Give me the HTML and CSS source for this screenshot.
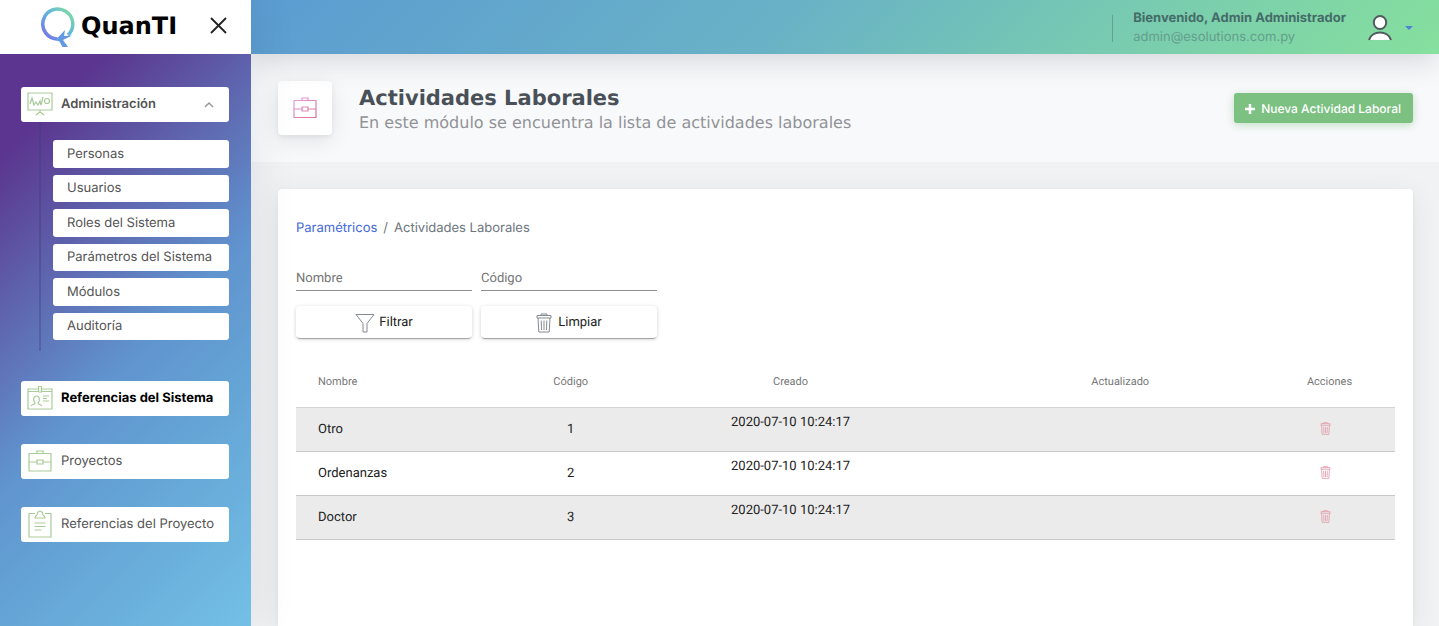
FILE: index.html
```html
<!DOCTYPE html>
<html lang="es">
<head>
<meta charset="utf-8">
<meta name="viewport" content="width=device-width, initial-scale=1">
<title>Actividades Laborales</title>
<link rel="stylesheet" href="styles.css">
</head>
<body>
<svg class="defs" width="0" height="0" aria-hidden="true">
  <defs>
    <linearGradient id="pink" x1="0" y1="0" x2="1" y2="1"><stop offset="0" stop-color="#e3a0e6"/><stop offset="1" stop-color="#e0708c"/></linearGradient>
    <symbol id="trash" viewBox="0 0 16 20"><path d="M5 2.500V1h6v1.500M1 2.500h14v2.500H1zM2 5l.8 14h10.400L14 5M5.200 7.500l.3 9.500M8 7.500V17M10.800 7.500l-.3 9.500"/></symbol>
  </defs>
</svg>
<div class="app">
  <aside class="sidebar">
    <div class="brand">
      <a class="logo" href="#">
        <svg width="35" height="42" viewBox="0 0 35 42" fill="none" aria-hidden="true">
          <defs><linearGradient id="q" x1="0" y1="1" x2="1" y2="0"><stop offset="0" stop-color="#7d6be6"/><stop offset=".5" stop-color="#5fb2e2"/><stop offset="1" stop-color="#86e09d"/></linearGradient></defs>
          <path d="M27 29A15 15 0 1 0 16.500 33" stroke="url(#q)" stroke-width="3.500"/>
          <path d="M14.500 34L24 24L23 30L31 29.500L22 34L27 41H21.500L18.500 35.500z" fill="#6399e2"/>
        </svg>
        <span>QuanTI</span>
      </a>
      <button class="close" aria-label="Cerrar menú"><svg width="17" height="17" viewBox="0 0 17 17" fill="none" stroke="#222" stroke-width="1.800"><path d="M1 1l15 15M16 1L1 16"/></svg></button>
    </div>
    <nav class="menu">
      <div class="group">
        <a class="item open" href="#">
          <svg class="icon" width="26" height="26" viewBox="0 0 26 26"><path d="M1 2h24v17H1zM13 19v3M9 24l4-3 4 3M3 13l2-6 2 7 2-3 2 3 2-4 1 4 2-8"/><circle cx="20" cy="10" r="2.500"/></svg>
          <span class="label">Administración</span>
          <svg class="chevron" width="10" height="7" viewBox="0 0 10 7"><path d="M1 6l4-4 4 4"/></svg>
        </a>
        <div class="submenu">
          <a href="#">Personas</a>
          <a href="#">Usuarios</a>
          <a href="#">Roles del Sistema</a>
          <a href="#">Parámetros del Sistema</a>
          <a href="#">Módulos</a>
          <a href="#">Auditoría</a>
        </div>
      </div>
      <a class="item active" href="#">
        <svg class="icon" width="26" height="26" viewBox="0 0 26 26"><path d="M11.500 4H1v20h24V4H14.500M1 6.500h10.500M14.500 6.500H25M11.500 1.500h3v5.500h-3zM4 21c1-2 4-1 4-3-2-2-2-7 1.500-7s3.500 5 1.500 7c0 2 3 1 4 3M16 11h6M16 13.500h4M16 16h6"/></svg>
        <span class="label">Referencias del Sistema</span>
      </a>
      <a class="item" href="#">
        <svg class="icon" width="26" height="26" viewBox="0 0 26 26"><path d="M2 5.500h22v17.500H2zM10 5.500V3h6v2.500M2 14h8M16 14h8M10 12h6v4h-6z"/></svg>
        <span class="label">Proyectos</span>
      </a>
      <a class="item" href="#">
        <svg class="icon" width="26" height="28" viewBox="0 0 26 28"><path d="M8 3.500H2V27h22V3.500h-6M8 8c0-3 2.500-1.500 2.500-4.500 0-3 5-3 5 0 0 3 2.500 1.500 2.500 4.500zM7.500 13h11M7.500 16.500h11M7.500 20h7"/></svg>
        <span class="label">Referencias del Proyecto</span>
      </a>
    </nav>
  </aside>
  <div class="page">
    <header class="topbar">
      <div class="user">
        <strong>Bienvenido, Admin Administrador</strong>
        <span>admin@esolutions.com.py</span>
      </div>
      <button class="account" aria-label="Cuenta">
        <svg width="24" height="26" viewBox="0 0 24 26" fill="#fff" stroke="#505a5f" stroke-width="2"><ellipse cx="12" cy="7.500" rx="6.200" ry="6.500"/><path d="M1 25C4 15 20 15 23 25" /></svg>
        <svg width="8" height="4" viewBox="0 0 8 4" fill="#4f83d6"><path d="M0 0h8L4 4z"/></svg>
      </button>
    </header>
    <main>
      <section class="heading">
        <div class="badge"><svg width="24" height="22" viewBox="0 0 24 22" fill="none" stroke="url(#pink)" stroke-width="1.200"><path d="M1 3.500h22v17H1zM9 3.500V1h6v2.500M1 12h8M15 12h8M9 10h6v4H9z"/></svg></div>
        <div class="titles">
          <h1>Actividades Laborales</h1>
          <p>En este módulo se encuentra la lista de actividades laborales</p>
        </div>
        <button class="new"><svg width="10" height="10" viewBox="0 0 10 10" stroke="#fff" stroke-width="2.500"><path d="M5 0v10M0 5h10"/></svg>Nueva Actividad Laboral</button>
      </section>
      <section class="card">
        <nav class="crumbs" aria-label="Ruta"><a href="#">Paramétricos</a><span>/</span><span>Actividades Laborales</span></nav>
        <form class="filters">
          <input type="text" placeholder="Nombre" aria-label="Nombre">
          <input type="text" placeholder="Código" aria-label="Código">
          <button type="button"><svg width="20" height="20" viewBox="0 0 20 20"><path d="M1 1.500h18l-7 9V19H8v-8.500z"/></svg>Filtrar</button>
          <button type="button" class="clear"><svg width="16" height="20"><use href="#trash"/></svg>Limpiar</button>
        </form>
        <table>
          <thead><tr><th class="name">Nombre</th><th class="code">Código</th><th class="date">Creado</th><th class="date">Actualizado</th><th class="actions">Acciones</th></tr></thead>
          <tbody>
            <tr><td class="name">Otro</td><td>1</td><td class="created">2020-07-10 10:24:17</td><td></td><td class="actions"><button aria-label="Eliminar Otro"><svg width="11" height="13"><use href="#trash"/></svg></button></td></tr>
            <tr><td class="name">Ordenanzas</td><td>2</td><td class="created">2020-07-10 10:24:17</td><td></td><td class="actions"><button aria-label="Eliminar Ordenanzas"><svg width="11" height="13"><use href="#trash"/></svg></button></td></tr>
            <tr><td class="name">Doctor</td><td>3</td><td class="created">2020-07-10 10:24:17</td><td></td><td class="actions"><button aria-label="Eliminar Doctor"><svg width="11" height="13"><use href="#trash"/></svg></button></td></tr>
          </tbody>
        </table>
      </section>
    </main>
  </div>
</div>
</body>
</html>
```
FILE: styles.css
```css
* { box-sizing: border-box; }
body { margin: 0; font: 13px/20px Inter, "Liberation Sans", sans-serif; color: #495057; text-rendering: geometricPrecision; }
a { color: inherit; text-decoration: none; }
button { border: 0; padding: 0; background: none; font: inherit; color: inherit; cursor: pointer; text-rendering: inherit; }
svg { flex: none; display: block; }
.defs { position: absolute; }
.app { display: flex; min-height: 100vh; background: #f1f2f4; }

.sidebar {
  flex: none; width: 251px; display: flex; flex-direction: column; position: relative; z-index: 1;
  background: linear-gradient(135deg, #5b358f 18%, #5f70b5 41%, #6093ce 55%, #64a3d5 70%, #73c0e6 100%);
  box-shadow: 7px 0 40px rgba(8, 10, 30, .07);
}
.brand { height: 54px; padding: 0 24px 0 41px; display: flex; align-items: center; justify-content: space-between; background: #fff; }
.logo { display: flex; align-items: center; gap: 5px; font: bold 24px/32px "DejaVu Sans", sans-serif; color: #000; }
.logo span { padding-bottom: 3px; }
.close { padding-bottom: 4px; }
.menu { padding: 33px 22px 33px 21px; display: flex; flex-direction: column; gap: 28px; }
.group { margin-bottom: 2px; }
.item { height: 35px; padding: 0 15px 2px 6px; display: flex; align-items: center; gap: 8px; background: #fff; border-radius: 3px; color: #545454; }
.item .label { flex: 1; white-space: nowrap; }
.open { font-weight: 600; }
.active { font-weight: 700; color: #000; }
.icon { fill: none; stroke: #a9cb98; stroke-width: 1.200; }
.chevron { fill: none; stroke: #999; stroke-width: 1.500; margin-top: 2px; }
.submenu { margin-left: 18px; padding: 18px 0 11px 12px; border-left: 2px solid rgba(60, 60, 120, .35); display: grid; grid-auto-rows: 1fr; gap: 7px; height: 229px; }
.submenu a { display: flex; align-items: center; padding-left: 14px; background: #fff; border-radius: 3px; color: #545454; }

.page { flex: 1; min-width: 0; display: flex; flex-direction: column; }
.topbar {
  height: 54px; padding: 1px 26px 0 0; display: flex; align-items: center; justify-content: flex-end; gap: 22px;
  background: linear-gradient(135deg, #5b9cd2 0%, #69b2c6 45%, #77c9b2 70%, #86e09d 100%);
  box-shadow: 0 7px 30px rgba(8, 10, 30, .14); position: relative;
}
.user { display: flex; flex-direction: column; padding-left: 21px; position: relative; line-height: 19px; color: #456b69; }
.user::before { content: ""; position: absolute; left: 0; top: 6px; bottom: 5px; border-left: 1px solid #5ea491; }
.user span { color: #649e8d; }
.account { display: flex; align-items: center; gap: 13px; }

main { flex: 1; display: flex; flex-direction: column; }
.heading { height: 108px; padding: 0 26px 0 27px; display: flex; align-items: center; gap: 27px; background: #f8f9fb; }
.badge { width: 54px; height: 54px; display: grid; place-items: center; background: #fff; border-radius: 4px; box-shadow: 0 6px 22px rgba(8, 10, 30, .09), 0 2px 5px rgba(8, 10, 30, .06); }
.titles { flex: 1; padding-top: 2px; font-family: "DejaVu Sans", sans-serif; }
h1 { margin: 0; font-size: 21px; font-weight: 700; line-height: 28px; color: #495057; }
.titles p { margin: 0; font-size: 16px; line-height: 22px; color: #919397; }
.new { height: 30px; padding: 1px 12px 0 11px; display: flex; align-items: center; gap: 6px; border-radius: 3px; background: #7cc082; color: #fff; font-weight: 500; font-size: 12px; box-shadow: 0 2px 8px rgba(124, 192, 130, .45); white-space: nowrap; }

.card { flex: 1; margin: 27px 26px 0 27px; padding: 29px 18px; background: #fff; border-radius: 4px 4px 0 0; box-shadow: 0 6px 30px rgba(8, 10, 30, .07), 0 2px 6px rgba(8, 10, 30, .04); }
.crumbs { display: flex; gap: 6px; color: #6c757d; }
.crumbs a { color: #4368d8; }
.filters { margin-top: 27px; display: grid; grid-template-columns: repeat(2, 176px); gap: 15px 9px; font: 13px/20px Roboto, sans-serif; }
.filters input { width: 100%; height: 26px; border: 0; border-bottom: 1px solid #8e8e8e; padding: 2px 0 0; background: none; font: inherit; color: #222; text-rendering: inherit; }
.filters input::placeholder { color: #757575; opacity: 1; }
.filters button { height: 32px; padding-top: 2px; display: flex; align-items: center; justify-content: center; gap: 4px; border-radius: 4px; color: #222; box-shadow: 0 2px 1px -1px rgba(0, 0, 0, .3), 0 1px 4px rgba(0, 0, 0, .18); }
.filters button svg { fill: none; stroke: #858a8f; }
.filters .clear { gap: 6px; }

table { width: 100%; margin-top: 17px; border-collapse: collapse; table-layout: fixed; font: 13px/20px Roboto, sans-serif; color: #222; }
th { height: 52px; padding: 2px 0 0; font-size: 11px; font-weight: 400; color: #777; }
th.name { width: 20%; }
th.code { width: 10%; }
th.date { width: 30%; }
th.actions { width: 10%; padding-right: 21px; }
.name { text-align: left; padding-left: 22px; }
td { height: 44px; padding: 2px 0 0; text-align: center; border-top: 1px solid #d4d4d4; border-bottom: 1px solid #c8c8c8; }
tbody tr:nth-child(odd) { background: #ebebeb; }
td.name { text-align: left; padding-left: 22px; }
td.created { padding-bottom: 15px; }
td.actions { padding: 0 29px 0 0; }
td.actions svg { fill: none; stroke: #e2a3b0; stroke-width: 1.400; }
td.actions button { display: inline-block; vertical-align: middle; }
```
